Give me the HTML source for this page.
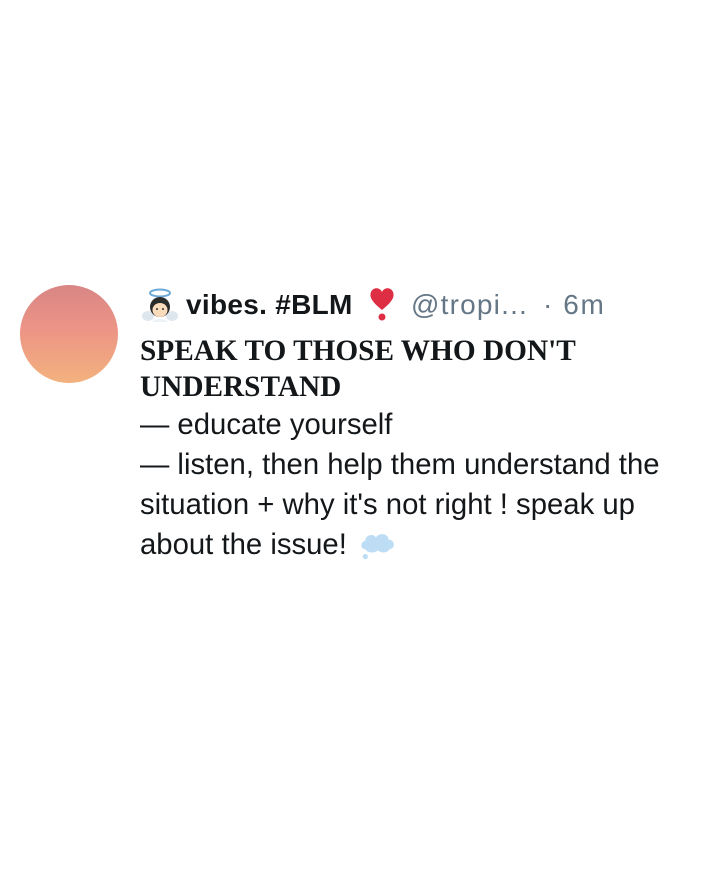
<!DOCTYPE html>
<html><head><meta charset="utf-8"><style>
html,body{margin:0;padding:0;background:#fff;width:702px;height:878px;overflow:hidden;}
.av{position:absolute;left:20px;top:285px;width:98px;height:98px;border-radius:50%;background:linear-gradient(180deg,#d88585 0%,#ec9486 45%,#f3b27e 100%);}
.t{position:absolute;font-family:"Liberation Sans",sans-serif;font-size:28px;white-space:nowrap;color:#14171a;line-height:34px;top:288px;}
.g{color:#657786;}
.sf{position:absolute;left:140px;top:333px;font-family:"Liberation Serif",serif;font-weight:bold;font-size:29.3px;line-height:36px;color:#14171a;white-space:nowrap;}
.body{position:absolute;left:140px;top:405px;font-family:"Liberation Sans",sans-serif;font-size:29.3px;line-height:40px;color:#14171a;white-space:nowrap;}
</style></head><body>
<div class="av"></div>
<svg style="position:absolute;left:141px;top:288px" width="38" height="36" viewBox="0 0 38 36">
<ellipse cx="19" cy="5" rx="10" ry="3.5" fill="none" stroke="#6aa8d8" stroke-width="2"/>
<ellipse cx="7" cy="28" rx="6" ry="5" fill="#dfe7ee"/><ellipse cx="31" cy="28" rx="6" ry="5" fill="#dfe7ee"/>
<circle cx="19" cy="19" r="10" fill="#2b2b2b"/>
<ellipse cx="19" cy="22" rx="7.5" ry="7" fill="#fadcbc"/>
<circle cx="16" cy="21" r="1" fill="#333"/><circle cx="22" cy="21" r="1" fill="#333"/>
<path d="M10 34 Q19 28 28 34 Z" fill="#eef2f5"/>
</svg>
<div class="t" style="left:186px;font-weight:bold;letter-spacing:0.3px">vibes. #BLM</div>
<svg style="position:absolute;left:368px;top:286px" width="28" height="36" viewBox="0 0 28 36">
<path d="M14 24 C4 16 1 11 3 6 C5 1 12 1 14 6 C16 1 23 1 25 6 C27 11 24 16 14 24 Z" fill="#dd2e44"/>
<circle cx="14" cy="31" r="3.5" fill="#dd2e44"/>
</svg>
<div class="t g" style="left:411px;letter-spacing:1.2px">@tropi...</div>
<div class="t g" style="left:543px;letter-spacing:1.6px">· 6m</div>
<div class="sf">SPEAK TO THOSE WHO DON'T<br>UNDERSTAND</div>
<div class="body">
— educate yourself<br>
— listen, then help them understand the<br>
situation + why it's not right ! speak up<br>
about the issue! <svg width="38" height="32" viewBox="0 0 36 30" style="vertical-align:-8px;margin-left:4px"><path d="M6 18 C1 18 1 11 6 10 C6 4 14 3 16 7 C19 2 28 3 28 9 C34 9 35 17 29 18 C27 22 20 22 18 19 C15 22 8 22 6 18 Z" fill="#bdddf4"/><circle cx="6" cy="25" r="2.5" fill="#bdddf4"/></svg>
</div>
</body></html>
